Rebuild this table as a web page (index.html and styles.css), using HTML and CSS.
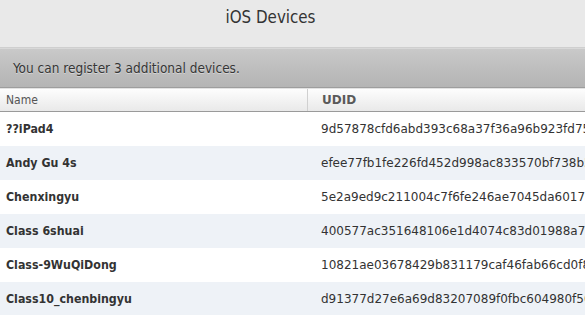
FILE: index.html
```html
<!DOCTYPE html>
<html>
<head>
<meta charset="utf-8">
<link rel="stylesheet" href="styles.css">
</head>
<body>
<div class="page">
  <div class="titlebar"><h1 class="title">iOS Devices</h1></div>
  <div class="notice">You can register 3 additional devices.</div>
  <div class="table">
    <div class="head">
      <div class="col-name">Name</div>
      <div class="col-udid">UDID</div>
    </div>
    <div class="row"><div class="col-name">??iPad4</div><div class="col-udid">9d57878cfd6abd393c68a37f36a96b923fd75</div></div>
    <div class="row alt"><div class="col-name">Andy Gu 4s</div><div class="col-udid">efee77fb1fe226fd452d998ac833570bf738b5</div></div>
    <div class="row"><div class="col-name">Chenxingyu</div><div class="col-udid">5e2a9ed9c211004c7f6fe246ae7045da6017c</div></div>
    <div class="row alt"><div class="col-name">Class 6shuai</div><div class="col-udid">400577ac351648106e1d4074c83d01988a73</div></div>
    <div class="row"><div class="col-name">Class-9WuQiDong</div><div class="col-udid">10821ae03678429b831179caf46fab66cd0f8</div></div>
    <div class="row alt"><div class="col-name">Class10_chenbingyu</div><div class="col-udid">d91377d27e6a69d83207089f0fbc604980f50</div></div>
  </div>
</div>
</body>
</html>
```
FILE: styles.css
```css
html, body {
  margin: 0;
  padding: 0;
  background: #fff;
  overflow: hidden;
}
.page {
  width: 585px;
  font-family: "DejaVu Sans Condensed", "DejaVu Sans", sans-serif;
  font-stretch: condensed;
  color: #333;
}
.titlebar {
  height: 47px;
  background: #e9e9e9;
  border-bottom: 1px solid #cfcfcf;
  display: flex;
  align-items: center;
  justify-content: center;
  padding-right: 44px;
}
.title {
  margin: 0;
  font-weight: normal;
  font-size: 16.8px;
  color: #333;
  padding-bottom: 14px;
}
.notice {
  height: 40px;
  box-sizing: border-box;
  background: linear-gradient(#c9c9c9, #bcbcbc 60%, #b4b4b4);
  border-bottom: 1px solid #9d9d9d;
  border-top: 1px solid #d8d8d8;
  display: flex;
  align-items: center;
  padding-left: 13px;
  font-size: 13.5px;
  color: #363636;
  text-shadow: 0 1px 0 rgba(255,255,255,0.4);
}
.head {
  display: flex;
  height: 24px;
  box-sizing: border-box;
  background: linear-gradient(#fdfdfd, #e9e9e9);
  border-bottom: 1px solid #9a9a9a;
  border-top: 1px solid #e2e2e2;
  font-size: 12px;
  color: #555;
  align-items: center;
}
.head .col-name {
  border-right: 1px solid #d0d0d0;
  align-self: stretch;
  display: flex;
  align-items: center;
}
.head .col-udid {
  font-weight: bold;
  color: #5a5a5a;
}
.col-name {
  width: 301px;
  padding-left: 6px;
  flex: none;
}
.col-udid {
  padding-left: 14px;
  white-space: nowrap;
  font-family: "DejaVu Sans", sans-serif;
  font-stretch: normal;
}
.row {
  display: flex;
  height: 34px;
  align-items: center;
  font-size: 12px;
  color: #333;
}
.row .col-name {
  font-weight: bold;
  font-size: 12.3px;
}
.row.alt {
  background: #eef2f7;
}
```
